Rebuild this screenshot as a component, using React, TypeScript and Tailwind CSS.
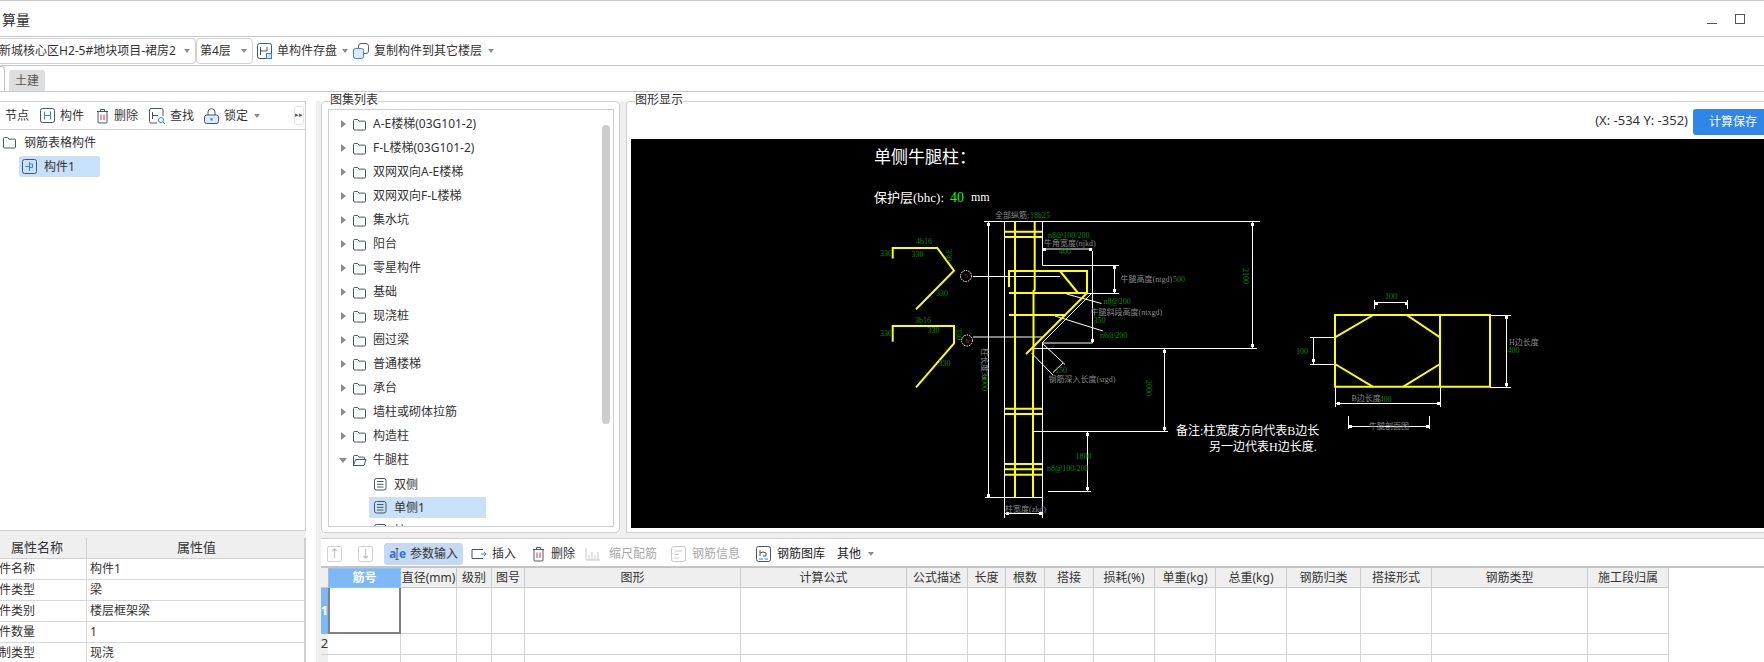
import type { ReactNode } from "react";

const folders = [
  "A-E楼梯(03G101-2)",
  "F-L楼梯(03G101-2)",
  "双网双向A-E楼梯",
  "双网双向F-L楼梯",
  "集水坑",
  "阳台",
  "零星构件",
  "基础",
  "现浇桩",
  "圈过梁",
  "普通楼梯",
  "承台",
  "墙柱或砌体拉筋",
  "构造柱",
];

const props = [
  ["件名称", "构件1"],
  ["件类型", "梁"],
  ["件类别", "楼层框架梁"],
  ["件数量", "1"],
  ["制类型", "现浇"],
];

const columns = [
  "直径(mm)",
  "级别",
  "图号",
  "图形",
  "计算公式",
  "公式描述",
  "长度",
  "根数",
  "搭接",
  "损耗(%)",
  "单重(kg)",
  "总重(kg)",
  "钢筋归类",
  "搭接形式",
  "钢筋类型",
  "施工段归属",
];

function Ico({ children, w = 16, h = 16 }: { children: ReactNode; w?: number; h?: number }) {
  return (
    <svg width={w} height={h} viewBox={`0 0 ${w} ${h}`} fill="none" stroke="#4a5468" strokeWidth="1" className="shrink-0">
      {children}
    </svg>
  );
}

function Caret() {
  return (
    <svg width="6" height="4" viewBox="0 0 6 4" className="shrink-0">
      <path d="M0 0h6L3 4z" fill="#8c8c8c" />
    </svg>
  );
}

function Folder() {
  return (
    <Ico w={15} h={13}>
      <path d="M1.500 11V2.500q0-1 1-1h3l1.500 1.600h5.500q1 0 1 1V11q0 1-1 1h-10q-1 0-1-1z" />
    </Ico>
  );
}

function DocIcon() {
  return (
    <Ico w={13} h={13}>
      <rect x="0.500" y="0.500" width="11.500" height="11.500" rx="2" />
      <path d="M3 3.500h6.500M3 6.300h6.500M3 9h6.500" />
    </Ico>
  );
}

function TreeRow({ label }: { label: string }) {
  return (
    <div className="flex h-6 items-center">
      <svg width="5" height="8" viewBox="0 0 5 8" className="ml-[12px] mr-[6px] shrink-0">
        <path d="M0 0l5 4-5 4z" fill="#8c8c8c" />
      </svg>
      <Folder />
      <span className="ml-[6px] whitespace-nowrap">{label}</span>
    </div>
  );
}

function TrashIcon() {
  return (
    <Ico w={13} h={16}>
      <path d="M1 3.500h11M4.500 3.500V1.500h4v2M2 3.500v10.500q0 1 1 1h7q1 0 1-1V3.500" />
      <path d="M5 6.500v5.500M8 6.500v5.500" stroke="#d8343a" />
    </Ico>
  );
}

function T({
  x,
  y,
  c = "#0a8a0a",
  s = 8,
  a = "start",
  r,
  children,
}: {
  x: number;
  y: number;
  c?: string;
  s?: number;
  a?: "start" | "middle";
  r?: boolean;
  children: ReactNode;
}) {
  return (
    <text
      x={x}
      y={y}
      fill={c}
      fontSize={s}
      textAnchor={a}
      dominantBaseline="central"
      fontFamily="'Liberation Serif','Noto Sans CJK SC',serif"
      transform={r ? `rotate(90 ${x} ${y})` : undefined}
    >
      {children}
    </text>
  );
}

const GRAY = "#8a8a8a";

// dimension line end marks
const marks = [
  [988, 224], [1252, 224], [1252, 345], [1114, 267], [1114, 290], [1044, 249], [1090, 249], [1092, 340],
  [1164, 351], [1164, 428], [1087, 434], [1087, 488], [988, 495], [1007, 513], [1040, 513],
  [1376, 303], [1406, 303], [1313, 360], [1506, 317], [1506, 384], [1338, 403], [1438, 403], [1350, 426], [1427, 426],
];

function Drawing() {
  const white = [
    "M984 221.500H1260",
    "M988.500 221.500V497",
    "M1004.500 221.500V518",
    "M1042.500 221.500V265.500H1119",
    "M1042.500 343V518",
    "M1042 249H1092.500",
    "M1092.500 251V343H1042",
    "M1092 293L1042 343",
    "M1033 348.500H1257",
    "M1252.500 221.500V348",
    "M1114.500 265.500V293",
    "M1087 293.500H1119",
    "M973 276.500H1060",
    "M973 337H1042",
    "M1066.500 294L1101.500 303.500",
    "M1055 316L1103 331",
    "M1042 343L1065 364.500",
    "M1031.500 353L1053 375",
    "M1053 372.500L1063 363",
    "M1164.500 349V431",
    "M1032 431.500H1168",
    "M1087.500 432V491",
    "M1048 491.500H1091",
    "M985 497.500H1042",
    "M1005 513.500H1042",
    "M1374.500 302.500H1407.500M1374.500 300V309M1407.500 300V309",
    "M1310 337.500H1335M1310 364.500H1335M1313.500 337.500V364.500",
    "M1490 315.500H1511M1490 387.500H1511M1506.500 315.500V387.500",
    "M1335.500 403.500H1440.500M1335.500 387V407M1440.500 387V407",
    "M1348.500 426.500H1429.500M1348.500 416V429M1429.500 416V429",
  ];
  const yellow = [
    "M892.700 258.500V248H937.300L954 270.700L916 309.300",
    "M892.700 341.700V326H954V343.300L916 387.300",
    "M1015 221.500V497",
    "M1034.700 221.500V290L1033.500 291V345L1033 358V497",
    "M1004.500 231.700H1042M1004.500 237H1042",
    "M1009 287V271H1087V293H1009",
    "M1060 271L1078 293",
    "M1087 293L1026 354",
    "M1009 315H1066",
    "M1005 408.700H1042M1005 414H1042",
    "M1005 464H1042M1005 469.300H1042M1005 474.700H1042",
    "M1335 315H1490V386.700H1335Z",
    "M1440 315V386.700",
    "M1335 337.300L1373.300 315M1406.700 315L1440 337.300",
    "M1335 364L1372.700 386.700M1403.300 386.700L1440 364",
  ];
  return (
    <svg viewBox="631 139 1133 389" className="h-[389px] w-[1133px] shrink-0 bg-black">
      {white.map((d) => (
        <path key={d} d={d} fill="none" stroke="#fff" strokeWidth="1" />
      ))}
      {marks.map(([x, y]) => (
        <rect key={`${x}-${y}`} x={x - 1} y={y - 1} width="3" height="3" fill="#fff" />
      ))}
      {yellow.map((d) => (
        <path key={d} d={d} fill="none" stroke="#ffff00" strokeWidth="2" />
      ))}
      <circle cx="966" cy="276" r="5.500" fill="none" stroke="#fff" strokeDasharray="1.500 1" />
      <circle cx="967" cy="340.500" r="5.500" fill="none" stroke="#fff" strokeDasharray="1.500 1" />
      <T x={966} y={276} a="middle" s={7} c="#a03030">5</T>
      <T x={967} y={340.500} a="middle" s={7} c="#a03030">6</T>

      <T x={874} y={157} c="#fff" s={17}>单侧牛腿柱：</T>
      <T x={874} y={197} c="#fff" s={13}>保护层(bhc):</T>
      <T x={950} y={197} c="#00ff00" s={14}>40</T>
      <T x={971} y={197} c="#fff" s={12}>mm</T>

      <T x={995} y={215} c={GRAY}>全部纵筋:</T>
      <T x={1030} y={215}>18b25</T>
      <T x={916} y={241.500}>4b16</T>
      <T x={880} y={253}>330</T>
      <T x={911.500} y={254.500}>330</T>
      <T x={948} y={249} r>330</T>
      <T x={936} y={293.500}>330</T>
      <T x={915} y={320.500}>3b16</T>
      <T x={880} y={333.500}>330</T>
      <T x={927.500} y={330.500}>330</T>
      <T x={958} y={328} r>330</T>
      <T x={938.500} y={363.500}>330</T>

      <T x={1048} y={235.500}>n8@100/200</T>
      <T x={1044} y={243.500} c={GRAY}>牛角宽度(njkd)</T>
      <T x={1059} y={251.500}>400</T>
      <T x={1120.500} y={279.500} c={GRAY}>牛腿高度(ntgd)</T>
      <T x={1173} y={279.500}>500</T>
      <T x={1245} y={268} r>2100</T>
      <T x={1103.500} y={301.500}>n8@200</T>
      <T x={1090.500} y={312.500} c={GRAY}>牛腿斜段高度(ntxgd)</T>
      <T x={1093.500} y={320.500}>350</T>
      <T x={1100} y={335.500}>n6@200</T>
      <T x={984} y={348} r c={GRAY}>柱长度3x</T>
      <T x={984} y={375} r>9000</T>
      <T x={1055} y={370.500}>150</T>
      <T x={1048.500} y={379.500} c={GRAY}>钢筋深入长度(srgd)</T>
      <T x={1148.500} y={380} r>2000</T>
      <T x={1075.500} y={456.500}>1800</T>
      <T x={1047} y={468.500}>n8@100/200</T>
      <T x={1005} y={509} c={GRAY}>柱宽度(zkd)</T>

      <T x={1176} y={430.500} c="#fff" s={12}>备注:柱宽度方向代表B边长</T>
      <T x={1209} y={446.500} c="#fff" s={12}>另一边代表H边长度.</T>

      <T x={1391} y={296.500} a="middle">100</T>
      <T x={1296} y={351.500}>100</T>
      <T x={1509} y={342.500} c={GRAY}>H边长度</T>
      <T x={1507.500} y={350.500}>400</T>
      <T x={1351.500} y={398.500} c={GRAY}>B边长度</T>
      <T x={1379.500} y={399.500}>400</T>
      <T x={1389} y={426.500} a="middle" c={GRAY}>牛腿剖面图</T>
    </svg>
  );
}

function TopBars() {
  return (
    <>
      <div className="relative flex h-[37px] items-center justify-between border-y border-y-[#c4c7cc] bg-white pl-[2px]">
        <span className="pt-[2px] text-[14px] text-[#333]">算量</span>
        <div className="flex items-center">
          <div className="mt-[9px] mr-[18px] h-px w-[10px] bg-[#555]" />
          <div className="h-[10px] w-[10px] border border-[#555]" />
          <div className="w-[19px]" />
        </div>
      </div>
      <div className="flex h-[29px] items-center border-b border-b-[#c4c7cc] bg-white">
        <div className="flex h-[26px] w-[196px] items-center justify-between rounded-r-[4px] border border-l-0 border-[#d0d0d0] pr-[5px]">
          <span className="ml-[-1px] whitespace-nowrap">新城核心区H2-5#地块项目-裙房2</span>
          <Caret />
        </div>
        <div className="flex h-[26px] w-[57px] items-center justify-between rounded-[4px] border border-[#d0d0d0] pr-[5px] pl-[3px]">
          <span>第4层</span>
          <Caret />
        </div>
        <div className="ml-[4px] flex items-center">
          <Ico>
            <rect x="0.500" y="0.500" width="14" height="15" rx="2" />
            <path d="M3.500 12V4M3.500 8H10M10 4V8" />
            <rect x="9.500" y="10.500" width="5" height="5" fill="#cfe3fb" stroke="#2f86e8" />
          </Ico>
          <span className="ml-[4px]">单构件存盘</span>
          <span className="mx-[5px]">
            <Caret />
          </span>
          <Ico>
            <rect x="5.500" y="0.500" width="10" height="10" rx="2.500" stroke="#5a6070" />
            <rect x="0.500" y="5.500" width="10" height="10" rx="2" stroke="#2f86e8" fill="#dcebfd" />
          </Ico>
          <span className="ml-[5px]">复制构件到其它楼层</span>
          <span className="ml-[6px]">
            <Caret />
          </span>
        </div>
      </div>
      <div className="flex h-[26px] items-end border-b border-b-[#c4c7cc] bg-white">
        <div className="h-[25px] w-[5px] rounded-tr-[4px] border-t border-r border-[#c4c7cc]" />
        <div className="ml-[4px] flex h-[21px] w-[36px] items-center justify-center rounded-t-[3px] bg-[#dedede] text-[#555]">
          土建
        </div>
      </div>
    </>
  );
}

function LeftColumn() {
  return (
    <div className="flex w-[306px] shrink-0 flex-col">
      <div className="flex h-[430px] flex-col border-t border-r border-b border-[#cfcfcf] bg-white">
        <div className="flex h-[28px] shrink-0 items-center whitespace-nowrap border-b border-b-[#cfcfcf]">
          <span className="ml-[5px]">节点</span>
          <span className="ml-[11px]">
            <Ico>
              <rect x="0.500" y="0.500" width="14" height="14" rx="2" />
              <path d="M4.500 3.500V11.500M10.500 3.500V11.500M4.500 7.500H10.500" stroke="#2f86e8" />
            </Ico>
          </span>
          <span className="ml-[4px]">构件</span>
          <span className="ml-[12px]">
            <TrashIcon />
          </span>
          <span className="ml-[5px]">删除</span>
          <span className="ml-[11px]">
            <Ico>
              <path d="M8 15H2q-1.500 0-1.500-1.500V2q0-1.500 1.500-1.500h10.500q1.500 0 1.500 1.500v6" />
              <path d="M3.500 11V4M3.500 7.500H9" />
              <circle cx="12" cy="12" r="2.500" stroke="#2f86e8" />
              <path d="M14 14l2 2" stroke="#2f86e8" />
            </Ico>
          </span>
          <span className="ml-[5px]">查找</span>
          <span className="ml-[10px]">
            <Ico>
              <path d="M4 7V4q0-3.300 3.500-3.300T11 4v3" />
              <rect x="0.500" y="7" width="14" height="8.500" rx="2" fill="#dcebfd" />
              <path d="M7.500 10v2.500" stroke="#2f86e8" strokeWidth="2" />
            </Ico>
          </span>
          <span className="ml-[4px]">锁定</span>
          <span className="ml-[6px]">
            <Caret />
          </span>
          <div className="ml-[34px] flex h-[19px] w-[10px] items-center justify-center rounded-[3px] border border-[#e4e4e4] text-[7px] text-[#555]">
            ▸▸
          </div>
        </div>
        <div className="flex flex-col pt-[2px]">
          <div className="flex h-[21px] items-center pl-[2px]">
            <Folder />
            <span className="ml-[7px]">钢筋表格构件</span>
          </div>
          <div className="mt-[3px] ml-[19px] flex h-[21px] w-[81px] items-center rounded-[2px] bg-[#c9e0f9] pl-[3px]">
            <Ico w={15} h={15}>
              <rect x="0.500" y="0.500" width="14" height="14" rx="2" />
              <path d="M7.500 3V12M7.500 7.500H3.500M7.500 5H10.500V8.500H7.500" stroke="#2f86e8" />
            </Ico>
            <span className="ml-[7px]">构件1</span>
          </div>
        </div>
      </div>
      <div className="h-[7px] shrink-0 bg-[#efefef]" />
      <div className="grid flex-1 grid-cols-[87px_219px] grid-rows-[21px_21px_21px_21px_21px_21px] overflow-hidden border-r-2 border-r-[#cfcfcf] bg-white text-[13px]">
        <div className="flex items-center justify-center border-r border-b border-[#d0d0d0] bg-[#efefef] pr-[12px]">属性名称</div>
        <div className="flex items-center justify-center border-b border-[#d0d0d0] bg-[#efefef]">属性值</div>
        {props.map(([name, value]) => (
          <div key={name} className="contents">
            <div className="flex items-center overflow-hidden border-r border-b border-[#d8d8d8] text-[12px]">
              <span className="ml-[-1px] whitespace-nowrap">{name}</span>
            </div>
            <div className="flex items-center border-b border-[#d8d8d8] pl-[3px] text-[12px]">{value}</div>
          </div>
        ))}
      </div>
    </div>
  );
}

function TreePanel() {
  return (
    <div className="relative h-[432px] w-[299px] shrink-0 rounded-[4px] border border-[#cfcfcf] bg-white px-[6px] pt-[7px] pb-[6px]">
      <span className="absolute top-[-10px] left-[8px] bg-white leading-[16px]">图集列表</span>
      <div className="relative h-[418px] w-[286px] overflow-hidden border border-[#cfcfcf] pt-[2px]">
        {folders.map((f) => (
          <TreeRow key={f} label={f} />
        ))}
        <div className="flex h-6 items-center">
          <svg width="8" height="5" viewBox="0 0 8 5" className="ml-[10px] mr-[5px] shrink-0">
            <path d="M0 0h8L4 5z" fill="#8c8c8c" />
          </svg>
          <Ico w={15} h={13}>
            <path d="M1.500 11.500V2.500q0-1 1-1h3l1.500 1.600h4.500q1 0 1 1V5.500M1.500 11.500L3.700 5.500H14l-2 6z" />
          </Ico>
          <span className="ml-[6px]">牛腿柱</span>
        </div>
        {["双侧", "单侧1", "柱"].map((d, i) => (
          <div key={d} className={`ml-[40px] flex h-[21px] w-[117px] items-center pl-[5px] ${i === 1 ? "mt-[2px] mb-px bg-[#c9e0f9]" : "mt-[2px] mb-px"}`}>
            <DocIcon />
            <span className="ml-[7px]">{d}</span>
          </div>
        ))}
        <div className="absolute top-[15px] right-[3px] h-[299px] w-[8px] rounded-[4px] bg-[#cdcdcd]" />
      </div>
    </div>
  );
}

function GraphicPanel() {
  return (
    <div className="relative flex h-[432px] min-w-0 flex-1 flex-col rounded-tl-[4px] border-t border-b border-l border-[#cfcfcf] bg-white pl-[4px]">
      <span className="absolute top-[-10px] left-[8px] bg-white leading-[16px]">图形显示</span>
      <div className="flex h-[37px] shrink-0 items-center justify-end">
        <span className="mr-[5px] text-[13px]">(X: -534 Y: -352)</span>
        <div className="mt-[2px] flex h-[26px] w-[71px] items-center rounded-l-[3px] bg-[#2f86e8] pl-[16px] text-[#fff]">
          计算保存
        </div>
      </div>
      <Drawing />
    </div>
  );
}

function BottomToolbar() {
  return (
    <div className="flex h-[29px] shrink-0 items-center border-b-2 border-b-[#c4c4c4] bg-white pt-[2px]">
      <div className="ml-[6px] flex h-[16px] w-[15px] items-center justify-center rounded-[2px] border border-[#d0d0d0] text-[11px] leading-none text-[#b0b0b0]">↑</div>
      <div className="ml-[16px] flex h-[16px] w-[15px] items-center justify-center rounded-[2px] border border-[#d0d0d0] text-[11px] leading-none text-[#b0b0b0]">↓</div>
      <div className="ml-[11px] flex h-[22px] w-[79px] items-center rounded-[3px] bg-[#c4daf3] pl-[5px]">
        <svg width="17" height="16" viewBox="0 0 17 16" className="mr-[4px] shrink-0">
          <text x="0" y="12" fontSize="12" fontWeight="700" fill="#2f76d8" fontFamily="'Noto Sans',sans-serif">a</text>
          <path d="M6.500 2.500h3M6.500 13.500h3M8 2.500v11" stroke="#555" fill="none" />
          <text x="10" y="12" fontSize="12" fontWeight="700" fill="#2f76d8" fontFamily="'Noto Sans',sans-serif">e</text>
        </svg>
        <span>参数输入</span>
      </div>
      <span className="ml-[8px]">
        <Ico>
          <path d="M1 3.500H12M1 12.500H12M1 3.500V12.500" />
          <path d="M10 8H15M13 6l2 2-2 2" stroke="#2f86e8" />
        </Ico>
      </span>
      <span className="ml-[5px]">插入</span>
      <span className="ml-[16px]">
        <TrashIcon />
      </span>
      <span className="ml-[6px]">删除</span>
      <span className="ml-[10px]">
        <Ico>
          <path d="M1 2V14H15M4 9v5M7 6v8M10 9v5M13 6v8" stroke="#c8c8c8" />
        </Ico>
      </span>
      <span className="ml-[8px] text-[#a8a8a8]">缩尺配筋</span>
      <span className="ml-[14px]">
        <Ico>
          <rect x="0.500" y="0.500" width="14" height="15" rx="2" stroke="#c8c8c8" />
          <path d="M3.500 5H11M3.500 8.500H8M3.500 12H7" stroke="#c8c8c8" />
        </Ico>
      </span>
      <span className="ml-[5px] text-[#a8a8a8]">钢筋信息</span>
      <span className="ml-[16px]">
        <Ico>
          <rect x="0.500" y="0.500" width="14" height="15" rx="2" />
          <path d="M4 10V4M4 7q3-2 6 0V10H7" />
          <path d="M3 13H7M8.500 13H12" stroke="#2f86e8" />
        </Ico>
      </span>
      <span className="ml-[5px] text-[#222]">钢筋图库</span>
      <span className="ml-[12px] text-[#222]">其他</span>
      <span className="ml-[7px]">
        <Caret />
      </span>
    </div>
  );
}

function RebarGrid() {
  const cell = "border-r border-b border-[#d4d4d4]";
  return (
    <div className="grid grid-cols-[7px_73px_56px_35px_33px_216px_166px_61px_38px_39px_49px_61px_61px_71px_74px_71px_156px_81px] grid-rows-[20px_46px_21px_21px] justify-start overflow-hidden bg-white">
      <div className="border-b border-[#c8c8c8] bg-[#efefef]" />
      <div className="flex items-center justify-center border border-[#8fc0f5] bg-[#7db8f7] font-bold text-white">筋号</div>
      {columns.map((c) => (
        <div key={c} className="flex items-center justify-center overflow-hidden whitespace-nowrap border-r border-b border-[#c8c8c8] bg-[#efefef]">
          {c}
        </div>
      ))}
      <div className="flex items-center justify-center overflow-hidden bg-[#7db8f7] text-[13px] font-bold text-white">1</div>
      <div className="border-r-2 border-b-2 border-l-2 border-[#808080]" />
      {columns.map((c) => (
        <div key={c} className={cell} />
      ))}
      <div className="flex items-center justify-center overflow-hidden border-b border-[#d4d4d4] bg-[#efefef] text-[13px]">2</div>
      <div className={cell} />
      {columns.map((c) => (
        <div key={c} className={cell} />
      ))}
      <div className="border-b border-[#d4d4d4] bg-[#efefef]" />
      <div className={cell} />
      {columns.map((c) => (
        <div key={c} className={cell} />
      ))}
    </div>
  );
}

export default function App() {
  return (
    <div className="flex h-[662px] w-[1764px] flex-col overflow-hidden bg-white text-[12px] text-[#333] [font-family:'Noto_Sans','Noto_Sans_CJK_SC',sans-serif]">
      <TopBars />
      <div className="flex min-h-0 flex-1 pt-[9px]">
        <LeftColumn />
        <div className="w-[10px] shrink-0" />
        <div className="w-[5px] shrink-0 bg-[#efefef]" />
        <div className="flex min-w-0 flex-1 flex-col">
          <div className="flex h-[432px] shrink-0">
            <TreePanel />
            <div className="w-[6px] shrink-0 bg-[#efefef]" />
            <GraphicPanel />
          </div>
          <div className="h-[6px] shrink-0 border-b border-b-[#cfcfcf] bg-[#efefef]" />
          <BottomToolbar />
          <RebarGrid />
        </div>
      </div>
    </div>
  );
}
